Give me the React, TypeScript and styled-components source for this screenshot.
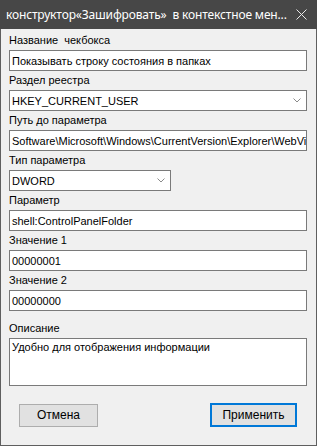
import React from "react";
import styled, { createGlobalStyle } from "styled-components";

const Global = createGlobalStyle`
  html, body { margin: 0; padding: 0; background: #f0f0f0; }
  body { font-family: "Liberation Sans", Arial, sans-serif; }
  * { box-sizing: border-box; }
`;

const Window = styled.div`
  width: 317px;
  height: 446px;
  background: #f0f0f0;
  border: 1px solid #5f5f5f;
  border-top: none;
  display: flex;
  flex-direction: column;
`;

const TitleBar = styled.div`
  height: 29px;
  margin: 0 -1px;
  background: #474747;
  color: #ffffff;
  display: flex;
  align-items: center;
  justify-content: space-between;
  padding: 0 10px 0 6px;
  font-family: "Noto Sans", sans-serif;
  font-size: 12px;
  letter-spacing: -0.15px;
  flex-shrink: 0;
`;

const Title = styled.span`
  white-space: pre;
  overflow: hidden;
`;

const Close = styled.svg`
  width: 11px;
  height: 11px;
  flex-shrink: 0;
`;

const Content = styled.div`
  padding: 2px 9px 0 8px;
  display: flex;
  flex-direction: column;
  flex: 1;
`;

const Label = styled.div<{ $gap?: number }>`
  height: 19px;
  margin-top: ${(p) => p.$gap ?? 0}px;
  font-size: 11px;
  line-height: 19px;
  color: #000;
  white-space: pre;
`;

const Field = styled.div<{ $width?: number }>`
  height: 21px;
  width: ${(p) => (p.$width ? `${p.$width}px` : "100%")};
  background: #fff;
  border: 1px solid #7a7a7a;
  display: flex;
  align-items: center;
  padding: 0 2px;
  font-size: 11px;
  color: #000;
  white-space: nowrap;
  overflow: hidden;
`;

const SelectBox = styled(Field)`
  justify-content: space-between;
  padding-right: 5px;
`;

const Chevron = styled.svg`
  width: 8px;
  height: 5px;
  flex-shrink: 0;
`;

const Memo = styled.div`
  height: 48px;
  background: #fff;
  border: 1px solid #7a7a7a;
  padding: 2px 2px;
  font-size: 11px;
  line-height: 13px;
  color: #000;
`;

const ButtonRow = styled.div`
  display: flex;
  justify-content: space-between;
  align-items: center;
  margin-top: 17px;
  padding: 0 10px 0 10px;
`;

const Button = styled.div<{ $primary?: boolean; $width: number }>`
  width: ${(p) => p.$width}px;
  height: ${(p) => (p.$primary ? 24 : 23)}px;
  background: #e1e1e1;
  border: ${(p) => (p.$primary ? "2px solid #0078d7" : "1px solid #adadad")};
  display: flex;
  align-items: center;
  justify-content: center;
  font-size: 12px;
  color: #000;
`;

const ChevronIcon = () => (
  <Chevron viewBox="0 0 8 5">
    <polyline points="0.5,0.5 4,4 7.5,0.5" fill="none" stroke="#8a8a8a" strokeWidth="1" />
  </Chevron>
);

export default function App() {
  return (
    <>
      <Global />
      <Window>
        <TitleBar>
          <Title>конструктор«Зашифровать»  в контекстное мен...</Title>
          <Close viewBox="0 0 11 11">
            <path d="M0.5 0.5 L10.5 10.5 M10.5 0.5 L0.5 10.5" stroke="#e8e8e8" strokeWidth="1" />
          </Close>
        </TitleBar>
        <Content>
          <Label>Название  чекбокса</Label>
          <Field>Показывать строку состояния в папках</Field>
          <Label>Раздел реестра</Label>
          <SelectBox>
            <span>HKEY_CURRENT_USER</span>
            <ChevronIcon />
          </SelectBox>
          <Label>Путь до параметра</Label>
          <Field>Software\Microsoft\Windows\CurrentVersion\Explorer\WebView</Field>
          <Label>Тип параметра</Label>
          <SelectBox $width={162}>
            <span>DWORD</span>
            <ChevronIcon />
          </SelectBox>
          <Label>Параметр</Label>
          <Field>shell:ControlPanelFolder</Field>
          <Label>Значение 1</Label>
          <Field>00000001</Field>
          <Label>Значение 2</Label>
          <Field>00000000</Field>
          <Label $gap={8}>Описание</Label>
          <Memo>Удобно для отображения информации</Memo>
          <ButtonRow>
            <Button $width={79}>Отмена</Button>
            <Button $width={87} $primary>Применить</Button>
          </ButtonRow>
        </Content>
      </Window>
    </>
  );
}
